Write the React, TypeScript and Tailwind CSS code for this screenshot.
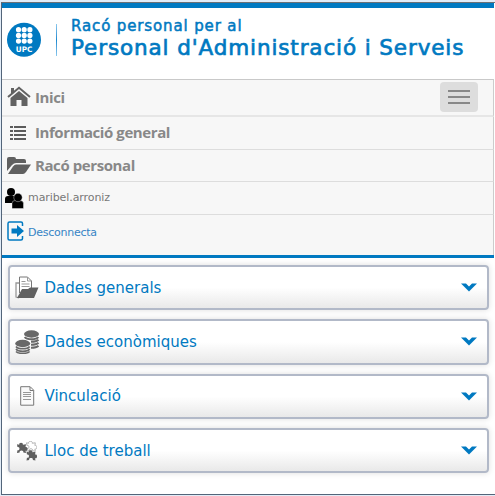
import React from 'react';

const Puzzle = ({ className }: { className: string }) => (
  <path
    className={className}
    d="M0 1.500l2.500.5c-1-3 5-3 4 0L10 1.500l-.5 3c3-1 3 5 0 4l.5 2.500-3-.5c1-3-5-3-4 0L0 11l.5-3c3 1 3-4.500 0-3.500z"
  />
);

const icons: Record<string, React.ReactNode> = {
  folder: (
    <svg width="24" height="23" viewBox="0 0 24 23">
      <path d="M4.500 17V1h8l4 4v10" fill="#fff" stroke="#777" />
      <path d="M12.500 1v4h4M6.500 5.500h4M6.500 8h8M6.500 10.500h8" fill="none" stroke="#999" />
      <path d="M4 7H1v14l3 1" fill="none" stroke="#999" strokeWidth="1.300" />
      <path d="M2 22l5-9h6l2-1.500h8.500L19 22z" fill="#616161" />
    </svg>
  ),
  coins: (
    <svg width="25" height="24" viewBox="0 0 25 24" fill="#686868">
      <ellipse cx="16.500" cy="4" rx="7.500" ry="3.700" />
      <g fill="none" stroke="#686868" strokeWidth="2">
        <path d="M9.700 7c2 3 11.600 3 13.600 0M16 11.800c3 0 6-.5 7.500-2M16 14.800c3 0 6-.5 7.500-2M16 17.800c3 0 6-.5 7.500-2" />
        <path d="M1 16.500c2 3 11.600 3 13.600 0M1 19c2 3 11.600 3 13.600 0M1 21.500c2 2.500 11.600 2.500 13.600 0" strokeWidth="1.600" />
      </g>
      <ellipse cx="7.700" cy="13.500" rx="7.500" ry="3.700" />
    </svg>
  ),
  page: (
    <svg className="ml-[5px]" width="15" height="20" viewBox="0 0 15 20" fill="none" stroke="#777">
      <path d="M.7.700h9.500l3.500 3.500v15H.7zM10 1v3.500h3.500" fill="#fafafa" />
      <path d="M3 6.500h8M3 8.500h8M3 10.500h8M3 13.500h8" stroke="#999" />
    </svg>
  ),
  puzzle: (
    <svg className="ml-[2px]" width="20" height="20" viewBox="0 0 20 20">
      <g transform="translate(9.500 .5) scale(.88)">
        <Puzzle className="fill-white stroke-[#aaa]" />
      </g>
      <g transform="translate(0 2) scale(.9)">
        <Puzzle className="fill-[#5f5f5f]" />
      </g>
      <g transform="translate(9.500 9.500) scale(.9)">
        <Puzzle className="fill-[#5f5f5f]" />
      </g>
    </svg>
  ),
};

const panels = [
  { label: 'Dades generals', icon: 'folder', gap: 'mb-[9px]' },
  { label: 'Dades econòmiques', icon: 'coins', gap: 'mb-[9px]' },
  { label: 'Vinculació', icon: 'page', gap: 'mb-[9px]' },
  { label: 'Lloc de treball', icon: 'puzzle', gap: '' },
];

const menuText =
  "relative -top-px text-[15px] leading-5 font-bold tracking-[-0.420px] text-[#888] whitespace-nowrap font-['Open_Sans','Noto_Sans',sans-serif]";

export default function App() {
  return (
    <div className="flex h-[496px] w-[495px] flex-col overflow-hidden bg-[#e2ecf7] pt-[2px] font-['DejaVu_Sans',sans-serif]">
      <div className="ml-px flex h-[493px] flex-col border-t border-b border-l border-t-[#6b7075] border-b-[#53657a] border-l-[#53657a] bg-white">
        <header className="mr-px flex h-[76px] shrink-0 border-t-[5px] border-[#0079c1]">
          <svg className="mt-[14px] ml-[5px]" width="35" height="36" viewBox="0 0 35 36">
            <circle cx="17" cy="17.700" r="17" fill="#0079c1" />
            {[7.700, 13.400, 19.100].map((y) =>
              [11.500, 17.200, 22.900].map((x) => <circle key={`${x}-${y}`} cx={x} cy={y} r="2.600" fill="#fff" />),
            )}
            <text x="8.800" y="29.500" textLength="16.500" lengthAdjust="spacingAndGlyphs" fill="#fff" fontSize="7.500" fontWeight="bold" fontFamily="DejaVu Sans, sans-serif">
              UPC
            </text>
          </svg>
          <div className="mt-[16px] ml-[14px] h-[32px] w-px bg-linear-to-b from-[#8ac8ed] via-[#1689cf] to-[#8ac8ed]" />
          <div className="mt-[9px] ml-[14px] whitespace-nowrap text-[#0079c1]">
            <div className="text-[15px] leading-[18px] tracking-[0.870px] [-webkit-text-stroke:0.500px_#0079c1]">Racó personal per al</div>
            <h1 className="text-[21.500px] leading-[26px] tracking-[0.880px] [-webkit-text-stroke:0.700px_#0079c1]">Personal d'Administració i Serveis</h1>
          </div>
        </header>

        <nav className="mr-px flex h-[179px] shrink-0 flex-col border-b-[3px] border-b-[#0079c1] bg-[#f7f7f7]">
          <div className="flex h-[38px] items-center border-t border-r border-b-2 border-t-[#c9c9c9] border-r-[#ccc] border-b-[#e6e6e6] pl-[5px]">
            <svg className="relative -top-px" width="24" height="21" viewBox="0 0 24 21" fill="#626262">
              <path d="M3.500 12L12 5l8.500 7v8h-6v-6h-5v6h-6z" />
              <path d="M1 11L12 1.800 23 11" fill="none" stroke="#626262" strokeWidth="2" />
              <path d="M4 2h3v4L4 8z" />
            </svg>
            <span className={`${menuText} ml-1`}>Inici</span>
            <button aria-label="Menu" className="mr-[15px] ml-auto flex h-[30px] w-[38px] -translate-y-px flex-col items-center justify-center gap-1 rounded-[4px] bg-[#ddd]">
              <span className="h-0.5 w-[22px] bg-[#888]" />
              <span className="h-0.5 w-[22px] bg-[#888]" />
              <span className="h-0.5 w-[22px] bg-[#888]" />
            </button>
          </div>
          <div className="flex h-[33px] items-center border-r border-b border-r-[#ccc] border-b-[#ddd] pl-[8px]">
            <svg width="16" height="14" viewBox="0 0 16 14" fill="#5c5c5c">
              <path d="M0 0h3v2H0zM4 0h12v2H4zM0 4h3v2H0zM4 4h12v2H4zM0 8h3v2H0zM4 8h12v2H4zM0 12h3v2H0zM4 12h12v2H4z" />
            </svg>
            <span className={`${menuText} ml-[9px]`}>Informació general</span>
          </div>
          <div className="flex h-[32px] items-center border-r border-b border-r-[#ccc] border-b-[#ddd] pl-[5px]">
            <svg width="24" height="19" viewBox="0 0 24 19" fill="#606060">
              <path d="M0 15V3q0-2 2-2h5q2 0 2 2h8q2 0 2 2v2H9q-2 0-4 2z" />
              <path d="M1 18l5-7.500Q7.500 8.500 9 8.500h15l-5 7.500q-1.500 2-3 2z" />
            </svg>
            <span className={`${menuText} ml-1`}>Racó personal</span>
          </div>
          <div className="flex h-[33px] items-center border-r border-b border-r-[#ccc] border-b-[#ddd] pl-[3px]">
            <svg width="19" height="21" viewBox="0 0 19 21">
              <circle cx="6" cy="4" r="4" />
              <path d="M0 15v-4q0-3 3-3h6q3 0 3 3v4z" />
              <g stroke="#f7f7f7" strokeWidth=".4">
                <path d="M7 20.500v-5q0-3 3-3h5q3.500 0 3.500 3v5z" />
                <circle cx="13" cy="9.500" r="4.200" />
              </g>
            </svg>
            <span className="ml-1 text-[11px] tracking-[-0.080px] text-[#777]">maribel.arroniz</span>
          </div>
          <div className="flex flex-1 items-start border-r border-r-[#ccc] pt-[6px] pl-[5px]">
            <svg width="18" height="21" viewBox="0 0 18 21">
              <path d="M15.500 5V2.500q0-1.500-1.500-1.500H2.500Q1 1 1 2.500v15Q1 19 2.500 19H14q1.500 0 1.500-1.500V15" fill="none" stroke="#0079c1" strokeWidth="1.500" />
              <path d="M4.500 7.500H10V4l7 6-7 6v-3.500H4.500z" fill="#0079c1" />
            </svg>
            <span className="mt-[4px] ml-[3px] text-[11px] leading-4 tracking-[-0.250px] text-[#3684c5]">Desconnecta</span>
          </div>
        </nav>

        <main className="flex flex-col px-[6px] pt-[7px]">
          {panels.map((p) => (
            <section
              key={p.label}
              className={`${p.gap} flex h-[45.300px] shrink-0 items-center rounded-[4px] border-2 border-[#b2b9c8] bg-linear-to-b from-white from-50% to-[#e9e9e9] pl-[5px] shadow-[0_0_6px_#ddd]`}
            >
              <div className="flex w-[29.500px] items-center">{icons[p.icon]}</div>
              <h2 className="text-[15px] leading-6 whitespace-nowrap text-[#0079c1]">{p.label}</h2>
              <svg className="mr-[10px] ml-auto" width="16" height="9" viewBox="0 0 16 9">
                <path d="M0 .5h5l3 3 3-3h5L8 8.500z" fill="#0079c1" />
              </svg>
            </section>
          ))}
        </main>
      </div>
    </div>
  );
}
